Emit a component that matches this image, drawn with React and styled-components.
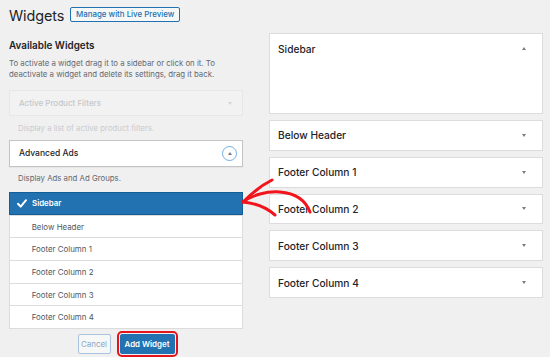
import React from "react";
import styled, { createGlobalStyle } from "styled-components";

const Global = createGlobalStyle`
  html, body { margin: 0; padding: 0; }
  body {
    background: #f0f0f1;
    font-family: Inter, "Noto Sans", "Liberation Sans", sans-serif;
    color: #1d2327;
    width: 550px;
    height: 357px;
    overflow: hidden;
  }
  * { box-sizing: border-box; }
`;

const Page = styled.div`
  position: relative;
  padding: 7px 7px 0 9px;
`;

const Header = styled.div`
  display: flex;
  align-items: center;
  gap: 6px;
  height: 15px;
`;

const Title = styled.h1`
  margin: 0;
  font-size: 14.4px;
  font-weight: 400;
  line-height: 15px;
  margin-top: 1px;
  letter-spacing: -0.1px;
`;

const OutlineButton = styled.button`
  font-family: inherit;
  height: 15px;
  width: 110px;
  padding: 0;
  border: 1px solid #2271b1;
  border-radius: 2px;
  background: #f6f7f7;
  color: #2271b1;
  font-size: 7.9px;
  font-weight: 500;
  line-height: 13px;
`;

const Columns = styled.div`
  display: grid;
  grid-template-columns: 234px 274px;
  column-gap: 26px;
  margin-top: 11px;
`;

const Left = styled.div`
  display: flex;
  flex-direction: column;
  padding-top: 6px;
`;

const H2 = styled.h2`
  margin: 0;
  font-size: 9.9px;
  font-weight: 600;
  line-height: 12px;
`;

const Desc = styled.p`
  margin: ${(p) => p.$m || "0"};
  padding-left: ${(p) => (p.$indent ? "9px" : "0")};
  font-size: 7.8px;
  line-height: 11px;
  color: ${(p) => (p.$faded ? "#c9cbce" : "#646970")};
`;

const Card = styled.div`
  height: ${(p) => p.$h}px;
  margin-top: ${(p) => p.$mt}px;
  display: flex;
  align-items: center;
  justify-content: space-between;
  padding: 0 ${(p) => (p.$faded ? "10px" : "5px")} 0 9px;
  background: ${(p) => (p.$faded ? "#f2f2f3" : "#fff")};
  border: 1px solid ${(p) => (p.$faded ? "#e7e7e9" : "#c3c4c7")};
  box-shadow: ${(p) => (p.$faded ? "none" : "0 1px 1px rgba(0,0,0,0.04)")};
  font-size: ${(p) => (p.$faded ? "8px" : "8.5px")};
  font-weight: 500;
  color: ${(p) => (p.$faded ? "#c5c7ca" : "#1d2327")};
`;

const Caret = styled.span`
  width: 0;
  height: 0;
  border-left: 2.5px solid transparent;
  border-right: 2.5px solid transparent;
  ${(p) =>
    p.$up
      ? `border-bottom: 3.5px solid ${p.$color || "#787c82"};`
      : `border-top: 3.5px solid ${p.$color || "#787c82"};`}
`;

const CircleBtn = styled.span`
  width: 15px;
  height: 15px;
  border-radius: 50%;
  border: 1px solid #72aee6;
  display: flex;
  align-items: center;
  justify-content: center;
`;

const List = styled.ul`
  list-style: none;
  margin: 8px 0 0;
  padding: 0;
  background: #fff;
  border: 1px solid #dcdcde;
`;

const Row = styled.li`
  height: 22.7px;
  display: flex;
  align-items: center;
  gap: 5px;
  padding-left: ${(p) => (p.$selected ? "7px" : "21.7px")};
  font-size: 7.9px;
  font-weight: ${(p) => (p.$selected ? 600 : 400)};
  color: ${(p) => (p.$selected ? "#fff" : "#50575e")};
  background: ${(p) => (p.$selected ? "#2271b1" : "#fff")};
  border: ${(p) => (p.$selected ? "1px solid #135e96" : "none")};
  margin: ${(p) => (p.$selected ? "-1px -1px 0" : "0")};
  border-top: ${(p) => (p.$selected ? "1px solid #135e96" : p.$first ? "none" : "1px solid #dcdcde")};
`;

const Actions = styled.div`
  display: flex;
  justify-content: center;
  align-items: center;
  gap: 9px;
  margin-top: 5px;
`;

const Btn = styled.button`
  font-family: inherit;
  height: 20px;
  width: ${(p) => (p.$primary ? "55px" : "33px")};
  padding: 0;
  border-radius: 2px;
  font-size: 7.9px;
  font-weight: ${(p) => (p.$primary ? 600 : 400)};
  border: 1px solid ${(p) => (p.$primary ? "#2271b1" : "#a9c2dd")};
  background: ${(p) => (p.$primary ? "#2271b1" : "#f6f7f7")};
  color: ${(p) => (p.$primary ? "#fff" : "#8aa6c7")};
  ${(p) => p.$primary && "outline: 2px solid #e3161e; outline-offset: 1px;"}
`;

const Right = styled.div`
  display: flex;
  flex-direction: column;
  gap: 6px;
`;

const Panel = styled.div`
  height: ${(p) => p.$h}px;
  background: #fff;
  border: 1px solid #dcdcde;
`;

const PanelHead = styled.div`
  height: ${(p) => p.$h}px;
  display: flex;
  align-items: center;
  justify-content: space-between;
  padding: 0 16.5px 0 8px;
  font-size: 10.2px;
  font-weight: 500;
  color: #1d2327;
`;

const Arrow = styled.svg`
  position: absolute;
  left: 0;
  top: 0;
  pointer-events: none;
`;

const Check = () => (
  <svg width="10" height="9" viewBox="0 0 10 9">
    <path d="M1 4.8 L3.7 7.6 L9 1.2" fill="none" stroke="#fff" strokeWidth="2" strokeLinecap="round" strokeLinejoin="round" />
  </svg>
);

const sidebars = ["Below Header", "Footer Column 1", "Footer Column 2", "Footer Column 3", "Footer Column 4"];
const rows = ["Sidebar", ...sidebars];

export default function App() {
  return (
    <>
      <Global />
      <Page>
        <Header>
          <Title>Widgets</Title>
          <OutlineButton>Manage with Live Preview</OutlineButton>
        </Header>
        <Columns>
          <Left>
            <H2>Available Widgets</H2>
            <Desc $m="7px 0 0">
              To activate a widget drag it to a sidebar or click on it. To
              <br />
              deactivate a widget and delete its settings, drag it back.
            </Desc>
            <Card $h={26} $mt={10} $faded>
              Active Product Filters
              <Caret $color="#d4d5d8" />
            </Card>
            <Desc $m="6.5px 0 0" $indent $faded>Display a list of active product filters.</Desc>
            <Card $h={27.5} $mt={6}>
              Advanced Ads
              <CircleBtn>
                <Caret $up />
              </CircleBtn>
            </Card>
            <Desc $m="6px 0 0" $indent>Display Ads and Ad Groups.</Desc>
            <List>
              {rows.map((r, i) => (
                <Row key={r} $selected={i === 0} $first={i === 0}>
                  {i === 0 && <Check />}
                  {r}
                </Row>
              ))}
            </List>
            <Actions>
              <Btn>Cancel</Btn>
              <Btn $primary>Add Widget</Btn>
            </Actions>
          </Left>
          <Right>
            <Panel $h={81}>
              <PanelHead $h={29}>
                Sidebar
                <Caret $up />
              </PanelHead>
            </Panel>
            {sidebars.map((s) => (
              <Panel key={s} $h={30.8}>
                <PanelHead $h={28.8}>
                  {s}
                  <Caret />
                </PanelHead>
              </Panel>
            ))}
          </Right>
        </Columns>
        <Arrow width="550" height="357" viewBox="0 0 550 357">
          <g fill="none" stroke="#f2141c" strokeWidth="3" strokeLinecap="round">
            <path d="M243 202 C 262 188, 300 186, 310 212" />
            <path d="M243 202 C 252 193, 262 185, 272 180" />
            <path d="M243 202 C 255 203, 267 208, 275 215" />
          </g>
        </Arrow>
      </Page>
    </>
  );
}
